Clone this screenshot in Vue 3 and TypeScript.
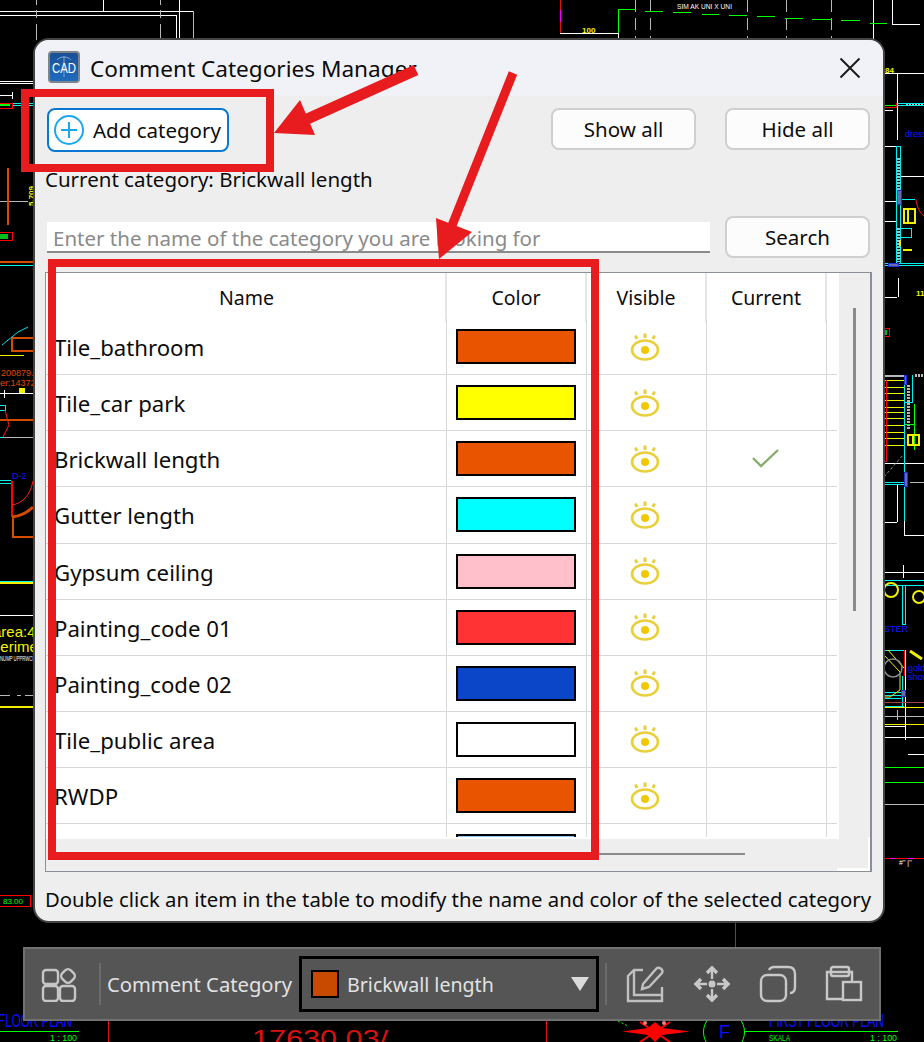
<script setup lang="ts">
const rows = [
  { name: 'Tile_bathroom', color: '#e85400', current: false },
  { name: 'Tile_car park', color: '#ffff00', current: false },
  { name: 'Brickwall length', color: '#e85400', current: true },
  { name: 'Gutter length', color: '#00ffff', current: false },
  { name: 'Gypsum ceiling', color: '#ffc0cb', current: false },
  { name: 'Painting_code 01', color: '#ff3333', current: false },
  { name: 'Painting_code 02', color: '#0c46c8', current: false },
  { name: 'Tile_public area', color: '#ffffff', current: false },
  { name: 'RWDP', color: '#e85400', current: false },
]
</script>

<template>
  <div class="stage">
    <svg class="cad" width="924" height="1042" viewBox="0 0 924 1042" fill="none">
      <g shape-rendering="crispEdges">
        <g stroke="#ffffff">
          <path d="M0 11.5H193M0 15.5H176M176.5 15V40M103.5 0V11M179.5 0V40M0 81.5H35M0 83.5H35M0 95.5H12M12.5 92V99" />
          <path d="M560 33.5H618M618.5 33V40M873.5 0V40M892.5 0V24M892 24.5H920" />
          <path d="M884 73.5H924M897.5 73V140M884 110.5H893M884 146.5H897M897 176.5H924M884 201.5H896M884 221.5H896M884 297.5H897M898.5 278V297" />
          <path d="M884 463.5H924M897.5 484V522M884 522.5H897M904.5 485V535M904 535.5H924M884 572.5H924M903.5 565V578M905.5 650V740M884 726.5H905M884 737.5H924M908 754.5H924" />
          <path d="M0 393.5H35M4.5 390V398M0 615.5H35" />
        </g>
        <g stroke="#b8b8b8">
          <path d="M36.5 0V5M36.5 10V18M36.5 24V40M160.5 0V5M160.5 10V18M160.5 24V40M193.5 11V40" />
          <path d="M635.5 0V40M650.5 0V40M747.5 0V40M786.5 0V40M831.5 0V40" stroke-dasharray="12 6" />
          <path d="M0 201.5H28M0 695.5H10M17 695.5H21M25 695.5H35M4 437.5H35" />
          <path d="M884 375.5H905M884 376.5H905M884 716.5H924M897.5 710V720M884 804.5H924M910 482.5H924" />
          <path d="M906 104.5H924M915 375.5H924" stroke-width="3" stroke-dasharray="2 1" />
          <path d="M897.5 158V190M897.5 228V262M907 385V430" stroke-width="3" stroke-dasharray="2 1" transform="translate(1 0)" />
        </g>
        <g stroke="#00ff00">
          <path d="M618.5 33V9.5H636M645 11.5H663M673 12.5H691M702 14.5H719M729 15.5H747M757 16.5H775M785 18.5H803M812 19.5H832M841 20.5H860M870 23.5H887" />
          <path d="M884 767.5H924M884 782.5H924M0 1031.5H79M745 1031.5H898M914.5 404V450M904 424.5H914" />
          <path d="M884 105.5H896" />
        </g>
        <g stroke="#00f0f0">
          <path d="M896 103.5H924M896 105.5H924M12 103.5H35M12 105.5H35M896.5 146V263M900.5 146V263M896 146.5H900M896 199.5H915M900 228.5H911V237.5H900ZM884 263.5H924M884 265.5H924" />
          <path d="M0 265.5H35M34.5 375V520M0 480.5H11M0 483.5H11M0 405.5H5V410.5H0M0 437.5H4M0 581.5H35" />
          <path d="M904.5 375V521M912.5 375V402H904M884 482.5H904M884 484.5H904M884 580.5H924M884 585.5H924M902.5 585V624H905.5V585" />
          <path d="M884 650.5H904M902.5 676V706M884 692.5H901M884 695.5H901M884 698.5H901M884 706.5H904" />
        </g>
        <g stroke="#f0f000">
          <path d="M884 380.5H904M884 387.5H904M884 393.5H904M884 400.5H904M884 407.5H904M884 412.5H904M884 418.5H904M884 425.5H904M884 432.5H904M884 438.5H904M884 445.5H904" />
          <path d="M0 355.5H24M884 724H924M884 707.5H924" stroke-width="1" />
          <path d="M0 583H35M0 706.5H35" stroke-width="2" />
          <path d="M904 209H915V223H904ZM908 209V223M908 445V435H919V445H908ZM913 435V445" stroke-width="2" />
          <path d="M900 240V246M903 249.5H912" stroke-width="2" />
        </g>
        <g stroke="#2030d8" fill="#6a6ab0">
          <rect x="897.5" y="190.5" width="4" height="14" />
          <rect x="888.5" y="263.5" width="10" height="3" />
          <rect x="904.5" y="472.5" width="3" height="14" />
          <rect x="904.5" y="375.5" width="2" height="9" />
          <rect x="901.5" y="690.5" width="4" height="6" />
        </g>
        <g stroke="#ff0000">
          <path d="M0 232.5H12V240.5H0M0 103.5H12V108.5H0M884 107.5H896V103M884 328.5H889V336.5H884M886.5 380V461H884M904.5 650V676M884 858.5H924M0 895.5H30.5V906.5H0" />
          <path d="M108.5 1020V1042M546.5 1020V1042M735.5 921V947M560.5 0V33" stroke="#e21010" />
          <path d="M11.5 481V517" stroke-width="2" />
        </g>
        <path d="M890 858.5H895M908 858.5H914M560.5 10V22" stroke="#ff00ff" />
        <rect x="0" y="234" width="8" height="5" fill="#00c020" />
        <rect x="885" y="330" width="2" height="5" fill="#00c020" />
        <path d="M0 104.5H10" stroke="#00ff00" stroke-width="2" />
        <g stroke="#d84a00">
          <path d="M7.5 168V225M0 262H35M12 338H35V351H12ZM0 420H35M12.5 517V537M12 536.5H35" stroke-width="2" />
        </g>
        <path d="M884 702H924" stroke="#a04040" />
      </g>
      <path d="M12 517C22 516 28 512 33 507" stroke="#d84a00" stroke-width="3" />
      <path d="M11 505C22 504 30 496 33 481M5 410L9 425L3 437M916 200C917 207 920 213 924 216" stroke="#ff1a1a" />
      <path d="M2 345L18 332L28 327" stroke="#00e0e0" stroke-width="1" />
      <path d="M884 477L903 455" stroke="#8a8a8a" stroke-dasharray="3 2" />
      <path d="M884 655L900 672V690L890 697H884M888 650L904 668" stroke="#f0f000" />
      <circle cx="891" cy="590" r="7" stroke="#f0f000" stroke-width="2" />
      <circle cx="919" cy="597" r="6" stroke="#f0f000" stroke-width="2" />
      <circle cx="893" cy="668" r="9" stroke="#8a8a8a" stroke-width="1.5" />
      <path d="M910 651L922 659" stroke="#f0f000" stroke-width="3" />
      <path d="M622 1031.5L648 1028L655 1022L662 1028L690 1031.5L662 1035L655 1042L648 1035Z" fill="#ff0000" />
      <path d="M640 1022L670 1042M670 1022L640 1042" stroke="#ff0000" stroke-width="2" />
      <circle cx="645" cy="1023" r="2" fill="#f08080" />
      <circle cx="664" cy="1023" r="2" fill="#f08080" />
      <path d="M618 1021L628 1026" stroke="#00ff00" stroke-dasharray="2 2" />
      <circle cx="724" cy="1032" r="20.5" stroke="#00ff00" />
      <rect x="19" y="388" width="6" height="5" fill="#f0f000" />
      <text x="-2" y="1027" textLength="74" lengthAdjust="spacingAndGlyphs" class="cad-blue">FLOOR PLAN</text>
      <text x="769" y="1027" textLength="115" lengthAdjust="spacingAndGlyphs" class="cad-blue">FIRST FLOOR PLAN</text>
      <text x="719" y="1038" class="cad-f">F</text>
      <text x="50" y="1041" textLength="27" lengthAdjust="spacingAndGlyphs" class="cad-green">1 : 100</text>
      <text x="769" y="1041" textLength="21" lengthAdjust="spacingAndGlyphs" class="cad-green">SKALA</text>
      <text x="870" y="1041" textLength="27" lengthAdjust="spacingAndGlyphs" class="cad-green">1 : 100</text>
      <text x="252" y="1047" textLength="136" lengthAdjust="spacingAndGlyphs" class="cad-red">17630.03/</text>
      <text x="3" y="904" class="cad-small">83.00</text>
      <text x="-7" y="637" class="cad-yellow">area:4</text>
      <text x="-8" y="652" class="cad-yellow">perimet</text>
      <text x="1" y="376" class="cad-orange">200879.0</text>
      <text x="0" y="386" class="cad-orange">er:14372</text>
      <text x="12" y="479" class="cad-blue-s">D-2</text>
      <text x="0" y="661" textLength="35" lengthAdjust="spacingAndGlyphs" class="cad-white">NUMP UPPRWCF</text>
      <text x="905" y="137" class="cad-blue-s">dresser</text>
      <text x="908" y="671" class="cad-blue-s">golden</text>
      <text x="908" y="680" class="cad-blue-s">shower</text>
      <text x="884" y="632" class="cad-blue-s">STER</text>
      <text x="677" y="9" textLength="55" lengthAdjust="spacingAndGlyphs" class="cad-white">SIM AK UNI X UNI</text>
      <text x="582" y="33" class="cad-label">100</text>
      <text x="885" y="73" class="cad-label">84</text>
      <text x="916" y="296" class="cad-label">11m</text>
      <text x="34" y="206" transform="rotate(-90 34 206)" class="cad-label">5.709</text>
      <text x="899" y="865" class="cad-white">#" |"</text>
    </svg>

    <section class="dialog">
      <header class="titlebar">
        <svg class="logo" width="32" height="32" viewBox="0 0 32 32">
          <defs>
            <linearGradient id="logoFill" x1="0" y1="0" x2="0" y2="1">
              <stop offset="0" stop-color="#1a4f94" />
              <stop offset="1" stop-color="#1f6cc0" />
            </linearGradient>
          </defs>
          <rect x="1" y="1" width="30" height="30" rx="3" fill="url(#logoFill)" stroke="#7c858c" stroke-width="2" />
          <path d="M9 9C12 5 20 5 23 9M16 5V26" stroke="#7fa9d8" fill="none" />
          <text x="16" y="22" textLength="24" lengthAdjust="spacingAndGlyphs" text-anchor="middle" class="logo-text">CAD</text>
        </svg>
        <span class="title">Comment Categories Manager</span>
        <svg class="close" width="22" height="22" viewBox="0 0 22 22">
          <path d="M1.5 1.5L20.5 20.5M20.5 1.5L1.5 20.5" stroke="#1c1c1c" stroke-width="2" />
        </svg>
      </header>
      <div class="body">
        <div class="actions">
          <button class="btn add">
            <svg width="30" height="30" viewBox="0 0 30 30" fill="none">
              <circle cx="15" cy="15" r="14" stroke="#1aa7ee" stroke-width="2" />
              <path d="M15 7V23M7 15H23" stroke="#1aa7ee" stroke-width="2" />
            </svg>
            Add category
          </button>
          <div class="spacer"></div>
          <button class="btn wide">Show all</button>
          <button class="btn wide">Hide all</button>
        </div>
        <div class="current">Current category: Brickwall length</div>
        <div class="search">
          <div class="input">Enter the name of the category you are looking for</div>
          <button class="btn wide">Search</button>
        </div>
        <div class="table">
          <div class="view">
            <div class="grid head">
              <div>Name</div><div>Color</div><div>Visible</div><div>Current</div><div></div>
            </div>
            <div v-for="row in rows" :key="row.name" class="grid row">
              <div class="name">{{ row.name }}</div>
              <div class="cell"><span class="swatch" :style="{ background: row.color }"></span></div>
              <div class="cell eye">
                <svg width="30" height="30" viewBox="0 0 30 30" fill="none">
                  <ellipse cx="15" cy="17" rx="13" ry="9.5" stroke="#e9cf3a" stroke-width="2.6" />
                  <circle cx="15" cy="17" r="4" fill="#f0c800" />
                  <path d="M15 0.5V5M5.5 2.5L7 6M24.5 2.5L23 6" stroke="#e9cf3a" stroke-width="3" />
                </svg>
              </div>
              <div class="cell check">
                <svg v-if="row.current" width="27" height="19" viewBox="0 0 27 19" fill="none">
                  <path d="M1 9L9 17L26 1" stroke="#87ad6d" stroke-width="2.4" />
                </svg>
              </div>
              <div></div>
            </div>
            <div class="grid row tail">
              <div></div>
              <div class="cell top"><span class="swatch partial"></span></div>
              <div></div><div></div><div></div>
            </div>
          </div>
          <div class="vthumb"></div>
          <div class="hthumb"></div>
          <div class="corner"></div>
        </div>
        <div class="hint">Double click an item in the table to modify the name and color of the selected category</div>
      </div>
    </section>

    <div class="toolbar">
      <svg class="tool" width="36" height="36" viewBox="0 0 36 36" fill="none" stroke="#c6c6c6" stroke-width="2.4">
        <rect x="2" y="4" width="15" height="14" rx="3" />
        <rect x="21" y="4" width="12" height="12" rx="4" transform="rotate(45 27 10)" />
        <rect x="2" y="20" width="15" height="15" rx="3" />
        <rect x="19" y="20" width="15" height="15" rx="3" />
      </svg>
      <span class="sep first"></span>
      <span class="label">Comment Category</span>
      <div class="select">
        <span class="mini"></span>
        <span class="sel-text">Brickwall length</span>
        <svg class="tri" width="20" height="16" viewBox="0 0 20 16"><path d="M1 1H19L10 15Z" fill="#dcdcdc" /></svg>
      </div>
      <span class="sep"></span>
      <svg class="tool t1" width="38" height="38" viewBox="0 0 38 38" fill="none" stroke="#c0c0c0" stroke-width="2.4">
        <path d="M17 5H8L2 11V36H36V22" />
        <path d="M8 5V30H36" />
        <path d="M17 19L30 4C32 1 38 4 36 8L23 22L16 24Z" />
      </svg>
      <svg class="tool t2" width="38" height="38" viewBox="0 0 38 38" fill="none" stroke="#c8c8c8" stroke-width="2.4">
        <path d="M19 4V14M19 24V34M4 19H14M24 19H34" />
        <path d="M14 8L19 3L24 8M14 30L19 35L24 30M8 14L3 19L8 24M30 14L35 19L30 24" stroke-width="3.4" />
        <circle cx="19" cy="19" r="3.5" fill="#c8c8c8" stroke="none" />
      </svg>
      <svg class="tool t3" width="38" height="38" viewBox="0 0 38 38" fill="none" stroke="#c8c8c8" stroke-width="2.4">
        <rect x="2" y="10" width="25" height="26" rx="6" />
        <path d="M10 5C11 3 12 2 15 2H29C33 2 36 4 36 9V22C36 26 34 28 31 28" />
      </svg>
      <svg class="tool t4" width="38" height="38" viewBox="0 0 38 38" fill="none" stroke="#c8c8c8" stroke-width="2.4">
        <path d="M17 34H2V7H27V16" />
        <rect x="6" y="2" width="18" height="9" rx="2" />
        <rect x="18" y="17" width="18" height="18" />
      </svg>
    </div>

    <svg class="notes" width="924" height="1042" viewBox="0 0 924 1042" fill="none">
      <rect x="25" y="93" width="245" height="75" stroke="#e81c1f" stroke-width="8" />
      <rect x="52" y="263" width="543" height="593" stroke="#e81c1f" stroke-width="8" />
      <path d="M416 70L305 120" stroke="#e81c1f" stroke-width="11" />
      <path d="M274 133L300 100L315 135Z" fill="#e81c1f" />
      <path d="M513 73L451 228" stroke="#e81c1f" stroke-width="9" />
      <path d="M439 259L436 218L472 232Z" fill="#e81c1f" />
    </svg>
  </div>
</template>

<style>
html, body { margin: 0; background: #000; }
</style>

<style scoped>
.stage { position: relative; width: 924px; height: 1042px; background: #000; overflow: hidden; font-family: "Noto Sans", "Open Sans", sans-serif; color: #0c0c0c; }
.cad, .notes { position: absolute; left: 0; top: 0; }
.notes { pointer-events: none; }
.cad text { font-family: "Liberation Sans", sans-serif; }
.cad-blue { fill: #0a10ff; font-size: 19px; }
.cad-f { fill: #0a10ff; font-size: 18px; }
.cad-blue-s { fill: #1018ff; font-size: 9px; }
.cad-green { fill: #00ff00; font-size: 9px; }
.cad-red { fill: #d81212; font-size: 24px; }
.cad-small { fill: #00ff00; font-size: 8px; }
.cad-yellow { fill: #f4f400; font-size: 15px; }
.cad-orange { fill: #e04a00; font-size: 9px; }
.cad-white { fill: #fff; font-size: 7px; }
.cad-label { fill: #f4f400; font-size: 8px; font-weight: 700; }

.dialog { position: absolute; left: 33px; top: 38px; width: 852px; height: 885px; box-sizing: border-box; border: 2px solid #444; border-radius: 16px; overflow: hidden; display: flex; flex-direction: column; background: #eeeeee; }
.titlebar { height: 56px; background: #f1f2f8; display: flex; align-items: center; padding: 0 22px 0 13px; flex: none; }
.logo { margin-top: -2px; flex: none; }
.logo-text { fill: #fff; font-size: 15px; font-family: "Liberation Sans", sans-serif; }
.title { margin-left: 10px; font-size: 22.6px; flex: 1; white-space: nowrap; }
.body { flex: 1; padding: 12px 13px 0 10px; display: flex; flex-direction: column; min-height: 0; }
.actions { display: flex; align-items: flex-start; gap: 29px; padding-left: 2px; }
.spacer { flex: 1; }
.btn { font: inherit; font-size: 20.5px; background: #fcfcfc; border: 2px solid #cfcfcf; border-radius: 8px; color: #0c0c0c; padding: 0; box-sizing: border-box; height: 42px; flex: none; }
.wide { width: 145px; }
.add { width: 182px; height: 44px; border-color: #0a78d0; background: #fff; display: flex; align-items: center; gap: 9px; padding-left: 5px; }
.current { margin-top: 11px; font-size: 20.5px; line-height: 32px; height: 32px; }
.search { display: flex; align-items: center; justify-content: space-between; margin-top: 21px; padding-left: 2px; }
.input { width: 663px; height: 31px; box-sizing: border-box; background: #fff; border-bottom: 2px solid #8a8a8a; color: #8a8a8a; font-size: 20.5px; line-height: 32px; padding-left: 6px; white-space: nowrap; overflow: hidden; }
.table { position: relative; margin-top: 14px; width: 827px; height: 600px; box-sizing: border-box; border: 1px solid #8a8f98; border-right-width: 2px; background: #eeeeee; flex: none; overflow: hidden; }
.view { width: 793px; height: 566px; background: #fff; overflow: hidden; }
.grid { display: grid; grid-template-columns: 401px 140px 120px 120px 10px; width: 791px; }
.head { height: 46px; font-size: 19.5px; text-align: center; }
.head > div { line-height: 49px; border-right: 2px solid #e6e6e6; }
.head > div:first-child { padding-left: 2px; }
.head > div:last-child { border-right: 0; }
.row { height: 56.14px; box-sizing: border-box; border-bottom: 1px solid #d8d8d8; }
.row > div { border-right: 1px solid #d8d8d8; }
.row > div:last-child { border-right: 0; }
.tail { height: 13px; border-bottom: 0; overflow: hidden; }
.name { padding-left: 8px; font-size: 22.2px; line-height: 57px; white-space: nowrap; }
.cell { display: flex; align-items: center; justify-content: center; }
.cell:nth-child(2) { padding-right: 1px; padding-bottom: 2px; box-sizing: border-box; }
.eye { padding-right: 3px; }
.check { padding: 0 2px 2px 0; }
.swatch { display: block; width: 120px; height: 35px; box-sizing: border-box; border: 2px solid #000; flex: none; }
.partial { background: #8cc8ff; }
.cell.top { align-items: flex-start; padding-top: 10px; padding-bottom: 0; }
.vthumb { position: absolute; left: 807px; top: 35px; width: 3px; height: 303px; background: #8a8a8a; }
.hthumb { position: absolute; left: 100px; top: 580px; width: 599px; height: 2px; background: #8a8a8a; }
.corner { position: absolute; left: 791px; top: 564px; right: 0; bottom: 0; box-sizing: border-box; border-right: 2px solid #fff; border-bottom: 3px solid #fff; }
.hint { margin-top: 12px; font-size: 20.3px; line-height: 30px; white-space: nowrap; }

.toolbar { position: absolute; left: 23px; top: 947px; width: 858px; height: 74px; box-sizing: border-box; border: 2px solid #717171; background: #555555; display: flex; align-items: center; padding-left: 16px; color: #e2e2e2; }
.sep { width: 2px; height: 42px; background: #6c6c6c; flex: none; margin-left: 6px; }
.sep.first { margin-left: 22px; }
.label { font-size: 20.2px; margin-left: 6px; white-space: nowrap; width: 185px; flex: none; }
.select { width: 300px; height: 56px; box-sizing: border-box; border: 3px solid #000; margin-left: 7px; display: flex; align-items: center; padding-left: 9px; flex: none; }
.mini { width: 28px; height: 28px; box-sizing: border-box; border: 2px solid #000; background: #c84a00; flex: none; }
.sel-text { font-size: 19.6px; margin-left: 8px; flex: 1; white-space: nowrap; }
.tri { margin-right: 6px; flex: none; }
.tool { flex: none; }
.t1 { margin-left: 19px; }
.t2 { margin-left: 29px; }
.t3 { margin-left: 28px; }
.t4 { margin-left: 28px; }
</style>
